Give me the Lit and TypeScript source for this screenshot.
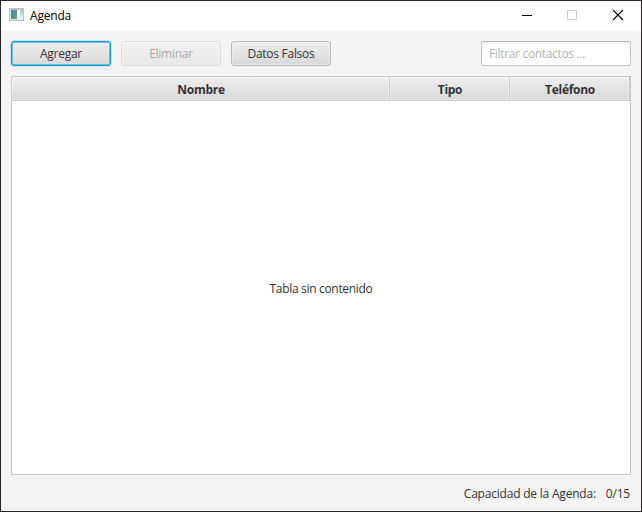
import { LitElement, html, css, svg } from "lit";
import { customElement, state } from "lit/decorators.js";

@customElement("app-root")
export class AppRoot extends LitElement {
  static styles = css`
    :host { display: block; font: 12px/16px "Open Sans", "Noto Sans", sans-serif; color: #333; }
    * { box-sizing: border-box; }
    .window { width: 642px; height: 512px; display: flex; flex-direction: column; background: #f4f4f4; border: 1px solid #2b2729; overflow: hidden; }
    .titlebar { height: 30px; flex: none; background: #fff; display: flex; align-items: center; color: #000; padding-left: 8px; }
    .appicon { width: 16px; height: 16px; display: block; flex: none; margin: -2px 5px 0 0; }
    .title { flex: 1; letter-spacing: -0.2px; }
    .ctl { width: 45px; height: 30px; display: block; flex: none; }
    .toolbar { display: flex; gap: 10px; padding: 10px 10px 0; height: 45px; flex: none; }
    button, input { font: inherit; color: inherit; height: 25px; outline: none; margin: 0; }
    button { width: 100px; padding: 1px 0 0; border: 1px solid #b8b8b8; border-radius: 3px; background: linear-gradient(#eeeeee, #d9d9d9); box-shadow: inset 0 0 0 1px rgba(255,255,255,.35); letter-spacing: -0.28px; }
    button.focused { border-color: #039ed3; box-shadow: 0 0 0 1px #c5e5f0, inset 0 0 0 .5px #039ed3; }
    button:disabled { opacity: .4; }
    .space { flex: 1; }
    input { width: 150px; padding: 0 7px; border: 1px solid #c2c2c2; border-top-color: #b5b5b5; border-radius: 3px; background: linear-gradient(#f4f4f4, #fff 4px); letter-spacing: -0.33px; }
    input::placeholder { color: #b2b2b2; opacity: 1; }
    .table { margin: 0 10px; height: 399px; flex: none; border: 1px solid #c8c8c8; background: #fff; display: flex; flex-direction: column; }
    .head { display: grid; grid-template-columns: 378px 120px 120px; height: 24px; border-bottom: 1px solid #c8c8c8; font-weight: 700; letter-spacing: -0.28px; }
    .cell { display: flex; align-items: center; justify-content: center; padding: 2px 0 0 1px; border-right: 1px solid #c8c8c8; background: linear-gradient(#eeeeee, #d9d9d9); box-shadow: inset 0 0 0 1px rgba(255,255,255,.45); }
    .empty { flex: 1; display: flex; align-items: center; justify-content: center; padding-top: 2px; letter-spacing: -0.32px; }
    .status { flex: 1; display: flex; align-items: center; justify-content: flex-end; gap: 10px; padding: 1px 11px 0 0; letter-spacing: -0.21px; }
  `;

  @state() private columns = ["Nombre", "Tipo", "Teléfono"];

  private control(shape: unknown) {
    return html`<svg class="ctl" viewBox="0 0 45 30">${shape}</svg>`;
  }

  render() {
    return html`
      <div class="window">
        <div class="titlebar">
          <svg class="appicon" viewBox="0 0 16 16" shape-rendering="crispEdges">
            <defs>
              <linearGradient id="screen" x2=".6" y2="1"><stop stop-color="#4a86b4"/><stop offset="1" stop-color="#4fa27a"/></linearGradient>
              <linearGradient id="side" x2="0" y2="1"><stop stop-color="#a5cfc4"/><stop offset="1" stop-color="#eef1f6"/></linearGradient>
            </defs>
            <path d="M0 1h15v13H0z" fill="#bfc1c5"/><path d="M1 3h13v10H1z" fill="#e6e8ec"/>
            <path d="M2 3h6v9H2z" fill="url(#screen)"/><path d="M8 3h3v9H8z" fill="#f7f8fa"/>
            <path d="M11 3h3v9h-3z" fill="url(#side)"/>
          </svg>
          <span class="title">Agenda</span>
          ${this.control(svg`<path d="M16 14.5h10" stroke="#000"/>`)}
          ${this.control(svg`<path d="M16.5 9.5h9v9h-9z" fill="none" stroke="#ccc"/>`)}
          ${this.control(svg`<path d="M17 9l10 10M27 9L17 19" stroke="#000" stroke-width="1.1"/>`)}
        </div>
        <div class="toolbar">
          <button class="focused">Agregar</button>
          <button disabled>Eliminar</button>
          <button>Datos Falsos</button>
          <span class="space"></span>
          <input placeholder="Filtrar contactos ..." />
        </div>
        <div class="table">
          <div class="head">${this.columns.map((c) => html`<div class="cell"><span>${c}</span></div>`)}</div>
          <div class="empty"><span class="note">Tabla sin contenido</span></div>
        </div>
        <div class="status"><span class="caption">Capacidad de la Agenda:</span><span class="count">0/15</span></div>
      </div>`;
  }
}
